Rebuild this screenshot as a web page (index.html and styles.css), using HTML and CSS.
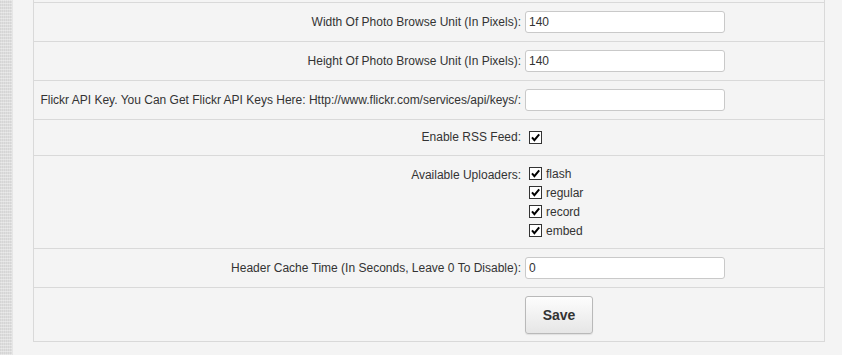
FILE: index.html
```html
<!DOCTYPE html>
<html>
<head>
<meta charset="utf-8">
<link rel="stylesheet" href="styles.css">
</head>
<body>
<div class="page">
  <div class="strip"></div>
  <div class="main">
    <div class="form">
      <div class="row row-top"></div>
      <div class="row">
        <label class="label">Width Of Photo Browse Unit (In Pixels):</label>
        <div class="control"><input class="text" type="text" value="140"></div>
      </div>
      <div class="row">
        <label class="label">Height Of Photo Browse Unit (In Pixels):</label>
        <div class="control"><input class="text" type="text" value="140"></div>
      </div>
      <div class="row">
        <label class="label">Flickr API Key. You Can Get Flickr API Keys Here: Http://www.flickr.com/services/api/keys/:</label>
        <div class="control"><input class="text" type="text" value=""></div>
      </div>
      <div class="row row-check">
        <label class="label">Enable RSS Feed:</label>
        <div class="control"><span class="cb"><svg width="13" height="13" viewBox="0 0 13 13"><rect x="0.5" y="0.5" width="12" height="12" fill="#fff" stroke="#333"/><path d="M3 6.3 L5.4 9.2 L10.2 3.4" fill="none" stroke="#000" stroke-width="2"/></svg></span></div>
      </div>
      <div class="row row-list">
        <label class="label">Available Uploaders:</label>
        <div class="control list">
          <div class="opt"><span class="cb"><svg width="13" height="13" viewBox="0 0 13 13"><rect x="0.5" y="0.5" width="12" height="12" fill="#fff" stroke="#333"/><path d="M3 6.3 L5.4 9.2 L10.2 3.4" fill="none" stroke="#000" stroke-width="2"/></svg></span><span class="opt-text">flash</span></div>
          <div class="opt"><span class="cb"><svg width="13" height="13" viewBox="0 0 13 13"><rect x="0.5" y="0.5" width="12" height="12" fill="#fff" stroke="#333"/><path d="M3 6.3 L5.4 9.2 L10.2 3.4" fill="none" stroke="#000" stroke-width="2"/></svg></span><span class="opt-text">regular</span></div>
          <div class="opt"><span class="cb"><svg width="13" height="13" viewBox="0 0 13 13"><rect x="0.5" y="0.5" width="12" height="12" fill="#fff" stroke="#333"/><path d="M3 6.3 L5.4 9.2 L10.2 3.4" fill="none" stroke="#000" stroke-width="2"/></svg></span><span class="opt-text">record</span></div>
          <div class="opt"><span class="cb"><svg width="13" height="13" viewBox="0 0 13 13"><rect x="0.5" y="0.5" width="12" height="12" fill="#fff" stroke="#333"/><path d="M3 6.3 L5.4 9.2 L10.2 3.4" fill="none" stroke="#000" stroke-width="2"/></svg></span><span class="opt-text">embed</span></div>
        </div>
      </div>
      <div class="row">
        <label class="label">Header Cache Time (In Seconds, Leave 0 To Disable):</label>
        <div class="control"><input class="text" type="text" value="0"></div>
      </div>
      <div class="row row-save">
        <div class="label"></div>
        <div class="control"><button class="save" type="button">Save</button></div>
      </div>
    </div>
  </div>
</div>
</body>
</html>
```

FILE: styles.css
```css
html, body {
  margin: 0;
  padding: 0;
  background: #f4f4f4;
  font-family: "Liberation Sans", Arial, sans-serif;
  font-size: 12px;
  color: #333;
}
.page {
  display: flex;
  min-height: 355px;
}
.strip {
  width: 12px;
  flex: none;
  background-color: #dedede;
  background-image:
    repeating-linear-gradient(0deg, rgba(255,255,255,0.35) 0 1px, transparent 1px 3px),
    repeating-linear-gradient(90deg, rgba(0,0,0,0.04) 0 1px, transparent 1px 2px);
  border-right: 1px solid #e6e6e6;
}
.main {
  padding-left: 20px;
  flex: none;
}
.form {
  width: 792px;
  box-sizing: border-box;
  border-left: 1px solid #d9d9d9;
  border-right: 1px solid #d9d9d9;
  background: #f4f4f4;
}
.row {
  display: grid;
  grid-template-columns: 491px 1fr;
  align-items: center;
  padding: 8px 0;
  border-bottom: 1px solid #d9d9d9;
}
.row-top {
  height: 2px;
  padding: 0;
}
.row-check {
  padding: 11px 0;
}
.row-check .label {
  line-height: 13px;
}
.row-list {
  align-items: start;
  padding: 8px 0;
}
.row-list .label {
  line-height: 19px;
  padding-top: 2px;
}
.row-save {
  padding: 8px 0 7px;
}
.label {
  text-align: right;
  padding-right: 4px;
  line-height: 14px;
}
.control {
  display: flex;
  align-items: center;
}
.text {
  box-sizing: border-box;
  width: 200px;
  height: 22px;
  margin: 0;
  padding: 0 3px;
  border: 1px solid #c9c9c9;
  border-radius: 3px;
  background: #fff;
  font-family: "Liberation Sans", Arial, sans-serif;
  font-size: 12px;
  color: #333;
  outline: none;
}
.cb {
  display: block;
  width: 13px;
  height: 13px;
  margin-left: 4px;
}
.cb svg {
  display: block;
}
.list {
  flex-direction: column;
  align-items: flex-start;
}
.opt {
  display: flex;
  align-items: center;
  height: 19px;
}
.opt-text {
  margin-left: 4px;
}
.save {
  box-sizing: border-box;
  width: 68px;
  height: 38px;
  margin: 0;
  padding: 0;
  border: 1px solid #b9b9b9;
  border-radius: 3px;
  background: linear-gradient(#fdfdfd, #e6e6e6);
  font-family: "Liberation Sans", Arial, sans-serif;
  font-weight: bold;
  font-size: 14px;
  color: #333;
  box-shadow: 0 1px 1px rgba(0,0,0,0.08);
}
```
